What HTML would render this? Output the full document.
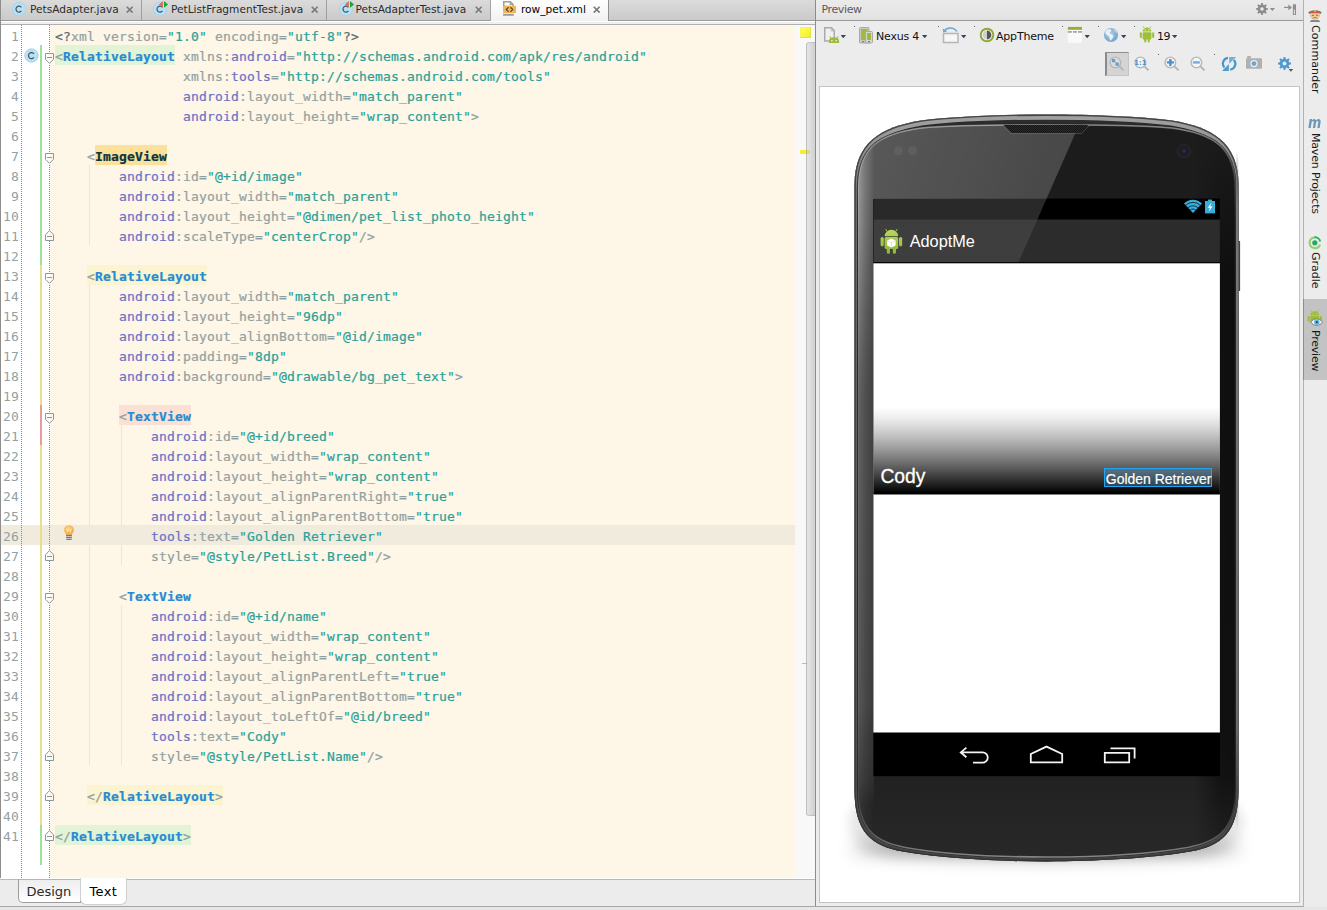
<!DOCTYPE html>
<html lang="en"><head><meta charset="utf-8"><title>row_pet.xml - AdoptMe</title>
<style>
*{box-sizing:border-box}
html,body{margin:0;padding:0}
body{width:1327px;height:910px;overflow:hidden;position:relative;background:#ececec;font-family:"DejaVu Sans","Liberation Sans",sans-serif;font-size:11px;color:#222}
.abs{position:absolute}
#tabbar{left:0;top:0;width:815px;height:21px;background:linear-gradient(#dbdbdb,#cacaca);border-bottom:1px solid #9a9a9a}
#tabgap{left:0;top:21px;width:815px;height:4px;background:linear-gradient(#ffffff 0,#ffffff 1px,#eeeeee 1px,#f1f1f1 3px);border-bottom:1px solid #b0b0b0}
.tab{top:0;height:20px;border-right:1px solid #9f9f9f;font-size:10.6px;line-height:20px;color:#2b2b2b;white-space:nowrap;letter-spacing:0}
.tab .lbl{position:absolute;top:-0.7px}
.tab.on{background:linear-gradient(#ffffff,#f1f1f1);height:21px;border-left:1px solid #a4a4a4;border-right:1px solid #8f8f8f;color:#000}
.x{position:absolute;top:5px;width:9px;height:9px}
#editor{left:0;top:25px;width:815px;height:853px;background:#fef6e7;overflow:hidden}
#gutter{left:0;top:0;width:50px;height:853px;background:#fff}
#leftedge{left:0;top:0;width:1px;height:906px;background:#8e8e8e}
.dot{width:1px;top:0;height:853px;background:repeating-linear-gradient(to bottom,#858585 0,#858585 1px,transparent 1px,transparent 2px)}
.ln{left:0;width:19px;text-align:right;height:20px;line-height:23px;font-family:"DejaVu Sans Mono","Liberation Mono",monospace;font-size:13px;letter-spacing:0.17px;color:#93a1a1}
.cl{height:20px;line-height:23px;white-space:pre;font-family:"DejaVu Sans Mono","Liberation Mono",monospace;font-size:13px;letter-spacing:0.173px;color:#93a1a1}
.cl span{-webkit-text-stroke:0.22px currentColor}
.g{color:#93a1a1}.d{color:#586e75}.t{color:#268bd2;font-weight:bold}.n{color:#6c71c4}.v{color:#2aa198}.w{color:#073642;font-weight:bold}
.guide{width:1px;background:#ece6d6}
.bar{left:40px;width:2px}
#cur{left:0;top:500px;width:795px;height:20px;background:#f1ebde}
#stripe{left:795px;top:0;width:20px;height:853px;background:#f8f8f8}
#thumb{left:806px;top:17px;width:9px;height:774px;background:linear-gradient(to right,rgba(205,205,205,.45),rgba(170,170,170,.5));border-radius:3px 0 0 3px;border:1px solid rgba(150,150,150,.35);border-right:none}
#btabs{left:0;top:878px;width:815px;height:28px;background:linear-gradient(#ffffff 0,#ffffff 1px,#bababa 1px,#bababa 2px,#ececec 2px)}
.bt{font-size:13px;line-height:16px;color:#2a2a2a;letter-spacing:-0.05px;white-space:nowrap}
#statusline{left:0;top:906px;width:1303px;height:1px;background:#a6a6a6}
#status{left:0;top:907px;width:1327px;height:3px;background:#e6e6e6}
#vdiv{left:815px;top:0;width:1px;height:906px;background:#8c8c8c}
#phead{left:816px;top:0;width:487px;height:21px;background:linear-gradient(#ebebeb,#e2e2e2);border-bottom:1px solid #9a9a9a;font-size:11px;color:#5a5a5a}
#ptool{left:816px;top:21px;width:487px;height:885px;background:#ececec}
#canvas{left:819px;top:86px;width:481px;height:817px;background:#fff;border:1px solid #c4c4c4}
#rstrip{left:1303px;top:0;width:24px;height:907px;background:#ececec;border-left:1px solid #b2b2b2}
.vt{position:absolute;transform-origin:0 0;transform:rotate(90deg);white-space:nowrap;font-size:11px;color:#1a1a1a;line-height:14px;letter-spacing:-0.2px}
.tbt{position:absolute;font-size:11px;color:#111;white-space:nowrap;letter-spacing:-0.25px}
.dd{position:absolute;width:5.4px;height:3.3px;background:#31466a;clip-path:polygon(0 0,100% 0,50% 100%)}
.sepdot{position:absolute;width:1px;height:1px;background:#666}
</style></head><body>
<div id="tabbar" class="abs"></div><div id="tabgap" class="abs"></div>
<div class="abs tab" style="left:1px;width:141px"><svg class="abs" style="left:10px;top:1px" width="17" height="16" viewBox="0 0 17 16"><circle cx="8" cy="8" r="6.7" fill="#b9dff5" stroke="#a3d2ee" stroke-width="0.8"/><path d="M10.4 6.3 A3 3 0 1 0 10.4 9.9" fill="none" stroke="#45505a" stroke-width="1.2"/></svg><span class="lbl" style="left:29px">PetsAdapter.java</span><svg class="abs" style="left:125px;top:5.5px" width="7.4" height="7.4" viewBox="0 0 8 8"><path d="M0.8 0.8 L7.2 7.2 M7.2 0.8 L0.8 7.2" stroke="#7c7c7c" stroke-width="1.8" fill="none"/></svg></div>
<div class="abs tab" style="left:142px;width:185px"><svg class="abs" style="left:10px;top:1px" width="17" height="16" viewBox="0 0 17 16"><circle cx="8" cy="8" r="6.7" fill="#b9dff5" stroke="#a3d2ee" stroke-width="0.8"/><path d="M10.4 6.3 A3 3 0 1 0 10.4 9.9" fill="none" stroke="#45505a" stroke-width="1.2"/><path d="M7 3.5 L10.9 0.1 L10.9 6.8 Z" fill="#e06a58"/><path d="M12 0 L16.1 3.4 L12 6.8 Z" fill="#10ae2c"/></svg><span class="lbl" style="left:29px">PetListFragmentTest.java</span><svg class="abs" style="left:169px;top:5.5px" width="7.4" height="7.4" viewBox="0 0 8 8"><path d="M0.8 0.8 L7.2 7.2 M7.2 0.8 L0.8 7.2" stroke="#7c7c7c" stroke-width="1.8" fill="none"/></svg></div>
<div class="abs tab" style="left:327px;width:164px"><svg class="abs" style="left:10.5px;top:1px" width="17" height="16" viewBox="0 0 17 16"><circle cx="8" cy="8" r="6.7" fill="#b9dff5" stroke="#a3d2ee" stroke-width="0.8"/><path d="M10.4 6.3 A3 3 0 1 0 10.4 9.9" fill="none" stroke="#45505a" stroke-width="1.2"/><path d="M7 3.5 L10.9 0.1 L10.9 6.8 Z" fill="#e06a58"/><path d="M12 0 L16.1 3.4 L12 6.8 Z" fill="#10ae2c"/></svg><span class="lbl" style="left:28.5px">PetsAdapterTest.java</span><svg class="abs" style="left:148px;top:5.5px" width="7.4" height="7.4" viewBox="0 0 8 8"><path d="M0.8 0.8 L7.2 7.2 M7.2 0.8 L0.8 7.2" stroke="#7c7c7c" stroke-width="1.8" fill="none"/></svg></div>
<div class="abs tab on" style="left:490px;width:119px"><svg class="abs" style="left:12px;top:1px" width="14" height="16" viewBox="0 0 14 16"><path d="M0.75 5.4 V0.85 H7.4 L10.1 3.5 V5.4 Z" fill="#fdfdfd" stroke="#9e9e9e" stroke-width="1.5"/><path d="M6.7 0.9 V4 H10.1 Z" fill="#9e9e9e"/><path d="M7.9 2.4 V3.2 H8.8 Z" fill="#fff"/><rect x="0" y="4.9" width="13" height="7.1" fill="#f5b553"/><rect x="0" y="12.8" width="10.8" height="2" fill="#9e9e9e"/><path d="M5.6 6.2 L3.2 8.45 L5.6 10.7 M7.4 6.2 L9.8 8.45 L7.4 10.7" fill="none" stroke="#4d4d4d" stroke-width="1.2"/></svg><span class="lbl" style="left:30px">row_pet.xml</span><svg class="abs" style="left:102px;top:5.5px" width="7.4" height="7.4" viewBox="0 0 8 8"><path d="M0.8 0.8 L7.2 7.2 M7.2 0.8 L0.8 7.2" stroke="#7c7c7c" stroke-width="1.8" fill="none"/></svg></div>
<div id="editor" class="abs">
<div id="gutter" class="abs"></div>
<div id="cur" class="abs"></div>
<div class="abs guide" style="left:89px;top:140px;height:80px"></div>
<div class="abs guide" style="left:89px;top:260px;height:240px"></div>
<div class="abs guide" style="left:89px;top:520px;height:220px"></div>
<div class="abs guide" style="left:121px;top:400px;height:100px"></div>
<div class="abs guide" style="left:121px;top:520px;height:20px"></div>
<div class="abs guide" style="left:121px;top:580px;height:160px"></div>
<div class="abs" style="left:55px;top:20px;width:120px;height:20px;background:#e3f3d6"></div>
<div class="abs" style="left:95px;top:120px;width:72px;height:20px;background:#fde09a"></div>
<div class="abs" style="left:87px;top:240px;width:120px;height:20px;background:#fcf4d0"></div>
<div class="abs" style="left:119px;top:380px;width:72px;height:20px;background:#fde0d4"></div>
<div class="abs" style="left:87px;top:760px;width:136px;height:20px;background:#fcf4d0"></div>
<div class="abs" style="left:55px;top:800px;width:136px;height:20px;background:#e3f3d6"></div>
<div class="abs dot" style="left:21px"></div><div class="abs dot" style="left:49px"></div>
<div class="abs bar" style="top:20px;height:220px;background:#9fe09a"></div>
<div class="abs bar" style="top:240px;height:140px;background:#e6e08c"></div>
<div class="abs bar" style="top:380px;height:40px;background:#ea9a9a"></div>
<div class="abs bar" style="top:420px;height:380px;background:#e6e08c"></div>
<div class="abs bar" style="top:800px;height:40px;background:#9fe09a"></div>
<div class="abs ln" style="top:0px">1</div>
<div class="abs ln" style="top:20px">2</div>
<div class="abs ln" style="top:40px">3</div>
<div class="abs ln" style="top:60px">4</div>
<div class="abs ln" style="top:80px">5</div>
<div class="abs ln" style="top:100px">6</div>
<div class="abs ln" style="top:120px">7</div>
<div class="abs ln" style="top:140px">8</div>
<div class="abs ln" style="top:160px">9</div>
<div class="abs ln" style="top:180px">10</div>
<div class="abs ln" style="top:200px">11</div>
<div class="abs ln" style="top:220px">12</div>
<div class="abs ln" style="top:240px">13</div>
<div class="abs ln" style="top:260px">14</div>
<div class="abs ln" style="top:280px">15</div>
<div class="abs ln" style="top:300px">16</div>
<div class="abs ln" style="top:320px">17</div>
<div class="abs ln" style="top:340px">18</div>
<div class="abs ln" style="top:360px">19</div>
<div class="abs ln" style="top:380px">20</div>
<div class="abs ln" style="top:400px">21</div>
<div class="abs ln" style="top:420px">22</div>
<div class="abs ln" style="top:440px">23</div>
<div class="abs ln" style="top:460px">24</div>
<div class="abs ln" style="top:480px">25</div>
<div class="abs ln" style="top:500px">26</div>
<div class="abs ln" style="top:520px">27</div>
<div class="abs ln" style="top:540px">28</div>
<div class="abs ln" style="top:560px">29</div>
<div class="abs ln" style="top:580px">30</div>
<div class="abs ln" style="top:600px">31</div>
<div class="abs ln" style="top:620px">32</div>
<div class="abs ln" style="top:640px">33</div>
<div class="abs ln" style="top:660px">34</div>
<div class="abs ln" style="top:680px">35</div>
<div class="abs ln" style="top:700px">36</div>
<div class="abs ln" style="top:720px">37</div>
<div class="abs ln" style="top:740px">38</div>
<div class="abs ln" style="top:760px">39</div>
<div class="abs ln" style="top:780px">40</div>
<div class="abs ln" style="top:800px">41</div>
<div class="abs cl" style="left:55px;top:0px"><span class="d">&lt;?</span><span class="g">xml version=</span><span class="v">"1.0"</span><span class="g"> encoding=</span><span class="v">"utf-8"</span><span class="d">?&gt;</span></div>
<div class="abs cl" style="left:55px;top:20px"><span class="g">&lt;</span><span class="t">RelativeLayout</span><span class="g"> xmlns:</span><span class="n">android</span><span class="g">=</span><span class="v">"http://schemas.android.com/apk/res/android"</span></div>
<div class="abs cl" style="left:183px;top:40px"><span class="g">xmlns:</span><span class="n">tools</span><span class="g">=</span><span class="v">"http://schemas.android.com/tools"</span></div>
<div class="abs cl" style="left:183px;top:60px"><span class="n">android</span><span class="g">:layout_width=</span><span class="v">"match_parent"</span></div>
<div class="abs cl" style="left:183px;top:80px"><span class="n">android</span><span class="g">:layout_height=</span><span class="v">"wrap_content"</span><span class="g">&gt;</span></div>
<div class="abs cl" style="left:87px;top:120px"><span class="g">&lt;</span><span class="w">ImageView</span></div>
<div class="abs cl" style="left:119px;top:140px"><span class="n">android</span><span class="g">:id=</span><span class="v">"@+id/image"</span></div>
<div class="abs cl" style="left:119px;top:160px"><span class="n">android</span><span class="g">:layout_width=</span><span class="v">"match_parent"</span></div>
<div class="abs cl" style="left:119px;top:180px"><span class="n">android</span><span class="g">:layout_height=</span><span class="v">"@dimen/pet_list_photo_height"</span></div>
<div class="abs cl" style="left:119px;top:200px"><span class="n">android</span><span class="g">:scaleType=</span><span class="v">"centerCrop"</span><span class="g">/&gt;</span></div>
<div class="abs cl" style="left:87px;top:240px"><span class="g">&lt;</span><span class="t">RelativeLayout</span></div>
<div class="abs cl" style="left:119px;top:260px"><span class="n">android</span><span class="g">:layout_width=</span><span class="v">"match_parent"</span></div>
<div class="abs cl" style="left:119px;top:280px"><span class="n">android</span><span class="g">:layout_height=</span><span class="v">"96dp"</span></div>
<div class="abs cl" style="left:119px;top:300px"><span class="n">android</span><span class="g">:layout_alignBottom=</span><span class="v">"@id/image"</span></div>
<div class="abs cl" style="left:119px;top:320px"><span class="n">android</span><span class="g">:padding=</span><span class="v">"8dp"</span></div>
<div class="abs cl" style="left:119px;top:340px"><span class="n">android</span><span class="g">:background=</span><span class="v">"@drawable/bg_pet_text"</span><span class="g">&gt;</span></div>
<div class="abs cl" style="left:119px;top:380px"><span class="g">&lt;</span><span class="t">TextView</span></div>
<div class="abs cl" style="left:151px;top:400px"><span class="n">android</span><span class="g">:id=</span><span class="v">"@+id/breed"</span></div>
<div class="abs cl" style="left:151px;top:420px"><span class="n">android</span><span class="g">:layout_width=</span><span class="v">"wrap_content"</span></div>
<div class="abs cl" style="left:151px;top:440px"><span class="n">android</span><span class="g">:layout_height=</span><span class="v">"wrap_content"</span></div>
<div class="abs cl" style="left:151px;top:460px"><span class="n">android</span><span class="g">:layout_alignParentRight=</span><span class="v">"true"</span></div>
<div class="abs cl" style="left:151px;top:480px"><span class="n">android</span><span class="g">:layout_alignParentBottom=</span><span class="v">"true"</span></div>
<div class="abs cl" style="left:151px;top:500px"><span class="n">tools</span><span class="g">:text=</span><span class="v">"Golden Retriever"</span></div>
<div class="abs cl" style="left:151px;top:520px"><span class="g">style=</span><span class="v">"@style/PetList.Breed"</span><span class="g">/&gt;</span></div>
<div class="abs cl" style="left:119px;top:560px"><span class="g">&lt;</span><span class="t">TextView</span></div>
<div class="abs cl" style="left:151px;top:580px"><span class="n">android</span><span class="g">:id=</span><span class="v">"@+id/name"</span></div>
<div class="abs cl" style="left:151px;top:600px"><span class="n">android</span><span class="g">:layout_width=</span><span class="v">"wrap_content"</span></div>
<div class="abs cl" style="left:151px;top:620px"><span class="n">android</span><span class="g">:layout_height=</span><span class="v">"wrap_content"</span></div>
<div class="abs cl" style="left:151px;top:640px"><span class="n">android</span><span class="g">:layout_alignParentLeft=</span><span class="v">"true"</span></div>
<div class="abs cl" style="left:151px;top:660px"><span class="n">android</span><span class="g">:layout_alignParentBottom=</span><span class="v">"true"</span></div>
<div class="abs cl" style="left:151px;top:680px"><span class="n">android</span><span class="g">:layout_toLeftOf=</span><span class="v">"@id/breed"</span></div>
<div class="abs cl" style="left:151px;top:700px"><span class="n">tools</span><span class="g">:text=</span><span class="v">"Cody"</span></div>
<div class="abs cl" style="left:151px;top:720px"><span class="g">style=</span><span class="v">"@style/PetList.Name"</span><span class="g">/&gt;</span></div>
<div class="abs cl" style="left:87px;top:760px"><span class="g">&lt;/</span><span class="t">RelativeLayout</span><span class="g">&gt;</span></div>
<div class="abs cl" style="left:55px;top:800px"><span class="g">&lt;/</span><span class="t">RelativeLayout</span><span class="g">&gt;</span></div>
<svg class="abs" style="left:44px;top:28px" width="11" height="12" viewBox="0 0 11 12"><rect x="1" y="0" width="5" height="11" fill="#fff"/><rect x="6" y="0" width="4" height="11" fill="#fef6e7"/><path d="M1.5 0.5 H9.5 V6.3 L5.5 10.4 L1.5 6.3 Z" fill="none" stroke="#8a999b" stroke-width="1"/><path d="M3 4.5 H8" stroke="#8a999b" stroke-width="1"/></svg>
<svg class="abs" style="left:44px;top:128px" width="11" height="12" viewBox="0 0 11 12"><rect x="1" y="0" width="5" height="11" fill="#fff"/><rect x="6" y="0" width="4" height="11" fill="#fef6e7"/><path d="M1.5 0.5 H9.5 V6.3 L5.5 10.4 L1.5 6.3 Z" fill="none" stroke="#8a999b" stroke-width="1"/><path d="M3 4.5 H8" stroke="#8a999b" stroke-width="1"/></svg>
<svg class="abs" style="left:44px;top:248px" width="11" height="12" viewBox="0 0 11 12"><rect x="1" y="0" width="5" height="11" fill="#fff"/><rect x="6" y="0" width="4" height="11" fill="#fef6e7"/><path d="M1.5 0.5 H9.5 V6.3 L5.5 10.4 L1.5 6.3 Z" fill="none" stroke="#8a999b" stroke-width="1"/><path d="M3 4.5 H8" stroke="#8a999b" stroke-width="1"/></svg>
<svg class="abs" style="left:44px;top:388px" width="11" height="12" viewBox="0 0 11 12"><rect x="1" y="0" width="5" height="11" fill="#fff"/><rect x="6" y="0" width="4" height="11" fill="#fef6e7"/><path d="M1.5 0.5 H9.5 V6.3 L5.5 10.4 L1.5 6.3 Z" fill="none" stroke="#8a999b" stroke-width="1"/><path d="M3 4.5 H8" stroke="#8a999b" stroke-width="1"/></svg>
<svg class="abs" style="left:44px;top:568px" width="11" height="12" viewBox="0 0 11 12"><rect x="1" y="0" width="5" height="11" fill="#fff"/><rect x="6" y="0" width="4" height="11" fill="#fef6e7"/><path d="M1.5 0.5 H9.5 V6.3 L5.5 10.4 L1.5 6.3 Z" fill="none" stroke="#8a999b" stroke-width="1"/><path d="M3 4.5 H8" stroke="#8a999b" stroke-width="1"/></svg>
<svg class="abs" style="left:44px;top:205px" width="11" height="12" viewBox="0 0 11 12"><rect x="1" y="0" width="5" height="11" fill="#fff"/><rect x="6" y="0" width="4" height="11" fill="#fef6e7"/><path d="M1.5 10.5 H9.5 V4.7 L5.5 0.6 L1.5 4.7 Z" fill="none" stroke="#8a999b" stroke-width="1"/><path d="M3 6.5 H8" stroke="#8a999b" stroke-width="1"/></svg>
<svg class="abs" style="left:44px;top:525px" width="11" height="12" viewBox="0 0 11 12"><rect x="1" y="0" width="5" height="11" fill="#fff"/><rect x="6" y="0" width="4" height="11" fill="#fef6e7"/><path d="M1.5 10.5 H9.5 V4.7 L5.5 0.6 L1.5 4.7 Z" fill="none" stroke="#8a999b" stroke-width="1"/><path d="M3 6.5 H8" stroke="#8a999b" stroke-width="1"/></svg>
<svg class="abs" style="left:44px;top:725px" width="11" height="12" viewBox="0 0 11 12"><rect x="1" y="0" width="5" height="11" fill="#fff"/><rect x="6" y="0" width="4" height="11" fill="#fef6e7"/><path d="M1.5 10.5 H9.5 V4.7 L5.5 0.6 L1.5 4.7 Z" fill="none" stroke="#8a999b" stroke-width="1"/><path d="M3 6.5 H8" stroke="#8a999b" stroke-width="1"/></svg>
<svg class="abs" style="left:44px;top:765px" width="11" height="12" viewBox="0 0 11 12"><rect x="1" y="0" width="5" height="11" fill="#fff"/><rect x="6" y="0" width="4" height="11" fill="#fef6e7"/><path d="M1.5 10.5 H9.5 V4.7 L5.5 0.6 L1.5 4.7 Z" fill="none" stroke="#8a999b" stroke-width="1"/><path d="M3 6.5 H8" stroke="#8a999b" stroke-width="1"/></svg>
<svg class="abs" style="left:44px;top:805px" width="11" height="12" viewBox="0 0 11 12"><rect x="1" y="0" width="5" height="11" fill="#fff"/><rect x="6" y="0" width="4" height="11" fill="#fef6e7"/><path d="M1.5 10.5 H9.5 V4.7 L5.5 0.6 L1.5 4.7 Z" fill="none" stroke="#8a999b" stroke-width="1"/><path d="M3 6.5 H8" stroke="#8a999b" stroke-width="1"/></svg>
<svg class="abs" style="left:24px;top:23px" width="15" height="15" viewBox="0 0 15 15"><circle cx="7.5" cy="7.5" r="6.8" fill="#b9dff5" stroke="#a3d2ee" stroke-width="0.8"/><path d="M9.9 5.8 A3 3 0 1 0 9.9 9.4" fill="none" stroke="#45505a" stroke-width="1.2"/></svg>
<svg class="abs" style="left:63px;top:500px" width="12" height="16" viewBox="0 0 12 16"><defs><radialGradient id="bulb" cx="0.42" cy="0.36" r="0.62"><stop offset="0" stop-color="#fcd88e"/><stop offset="0.55" stop-color="#f7bd63"/><stop offset="1" stop-color="#f0a64c"/></radialGradient></defs><path d="M6 0.3 C2.9 0.3 1.1 2.5 1.1 5 C1.1 7.2 2.7 8.2 3.2 10 H8.8 C9.3 8.2 10.9 7.2 10.9 5 C10.9 2.5 9.1 0.3 6 0.3 Z" fill="url(#bulb)"/><path d="M3.2 4.2 L4.6 5.4 V7 M5.2 4.4 L6 5.2 L6.8 4.4 M8.8 4.2 L7.4 5.4 V7" fill="none" stroke="#fff3cc" stroke-width="0.9"/><rect x="3.1" y="10" width="5.8" height="5" fill="#c4c4c4"/><rect x="3.1" y="10" width="5.8" height="1" fill="#727a82"/><rect x="3.1" y="12" width="5.8" height="1" fill="#7c7c7c"/><rect x="3.6" y="14" width="4.8" height="1" fill="#7c7c7c"/></svg>
<div id="stripe" class="abs"></div>
<div class="abs" style="left:800px;top:2px;width:11px;height:11px;background:linear-gradient(135deg,#ffff58,#f0f02c);border:1px solid #e2e240;border-top-color:#f4f45a;border-left-color:#f4f45a"></div>
<div class="abs" style="left:800px;top:125px;width:10px;height:4px;background:#f3ef2a;border-radius:1px"></div>
<div class="abs" style="left:802px;top:638px;width:5px;height:1px;background:#b9b4e6"></div>
<div id="thumb" class="abs"></div>
</div>
<div id="leftedge" class="abs"></div>
<div id="btabs" class="abs"></div>
<div class="abs bt" style="left:18px;top:879px;width:63px;height:24px;border:1px solid #9d9d9d;border-top-color:#b4b4b4;border-radius:0 0 0 5px;background:linear-gradient(#eeeeee,#ffffff)"><span style="position:absolute;left:7.6px;top:3.5px">Design</span></div>
<div class="abs bt" style="left:80px;top:878px;width:47px;height:27px;border:1px solid #cfcfcf;border-top:none;border-radius:0 0 6px 6px;background:#fff;color:#000"><span style="position:absolute;left:8.4px;top:5.5px;letter-spacing:0.4px">Text</span></div>
<div id="statusline" class="abs"></div><div id="status" class="abs"></div>
<div id="vdiv" class="abs"></div>
<div id="phead" class="abs"><span style="position:absolute;left:5.5px;top:2.5px;letter-spacing:-0.38px">Preview</span></div>
<svg class="abs" style="left:1256px;top:3px" width="12" height="12" viewBox="0 0 12 12"><polygon points="11.94,5.15 11.94,6.85 10.18,7.07 9.72,8.20 10.80,9.60 9.60,10.80 8.20,9.72 7.07,10.18 6.85,11.94 5.15,11.94 4.93,10.18 3.80,9.72 2.40,10.80 1.20,9.60 2.28,8.20 1.82,7.07 0.06,6.85 0.06,5.15 1.82,4.93 2.28,3.80 1.20,2.40 2.40,1.20 3.80,2.28 4.93,1.82 5.15,0.06 6.85,0.06 7.07,1.82 8.20,2.28 9.60,1.20 10.80,2.40 9.72,3.80 10.18,4.93" fill="#8c8c8c"/><circle cx="6.0" cy="6.0" r="1.80" fill="#e8e8e8"/></svg>
<div class="dd" style="left:1269.8px;top:7.9px;width:5.2px;height:3px;background:#8c8c8c"></div>
<svg class="abs" style="left:1284px;top:4px" width="13" height="12" viewBox="0 0 13 12"><path d="M0 3.4 H7" fill="none" stroke="#8e8e8e" stroke-width="1.2"/><path d="M4.4 0.6 L8 3.4 L4.4 6.2 Z" fill="#8e8e8e"/><rect x="8.9" y="0.3" width="3.1" height="10.7" fill="#8e8e8e"/><rect x="9.9" y="5.6" width="1.1" height="4.6" fill="#dcdcdc"/></svg>
<div id="ptool" class="abs"></div>
<svg class="abs" style="left:823px;top:26px" width="18" height="18" viewBox="0 0 18 18"><path d="M1.75 1.85 H8.4 L11.2 4.6 V15.1 H1.75 Z" fill="#f0f0f0" stroke="#aaaaaa" stroke-width="1.5"/><path d="M8.2 2.2 V4.9 H10.9" fill="none" stroke="#b4b4b4" stroke-width="0.9"/><path d="M5.9 16.9 V15.2 A5.1 4 0 0 1 16.1 15.2 V16.9 Z" fill="#9dba3a"/><path d="M7.9 12.2 L6.9 10.5 M14.1 12.2 L15.1 10.5" stroke="#9dba3a" stroke-width="1.2"/><circle cx="8.9" cy="14.7" r="0.75" fill="#fff"/><circle cx="13.1" cy="14.7" r="0.75" fill="#fff"/></svg>
<div class="dd" style="left:840.6px;top:35px"></div>
<svg class="abs" style="left:859px;top:27px" width="14" height="17" viewBox="0 0 14 17"><rect x="0.5" y="0.5" width="9.5" height="15.5" rx="1" fill="#c9c9c9" stroke="#a9a9a9"/><rect x="2" y="2" width="6.5" height="11" fill="#9dbc39"/><rect x="6.5" y="4.5" width="7" height="11.5" rx="1" fill="#d6d6d6" stroke="#a9a9a9"/><rect x="8" y="6" width="4" height="7" fill="#9dbc39"/><rect x="3.2" y="14.2" width="2" height="1" fill="#666"/><rect x="9" y="14.2" width="2" height="1" fill="#666"/></svg>
<span class="tbt" style="left:876px;top:29.5px;letter-spacing:-0.2px">Nexus 4</span>
<div class="dd" style="left:922px;top:35px"></div>
<svg class="abs" style="left:942px;top:26px" width="18" height="18" viewBox="0 0 18 18"><rect x="1.5" y="7.5" width="14.5" height="9" fill="#f6f6f6" stroke="#b5b5b5" stroke-width="1.5"/><path d="M2 5.2 C5 1.2 11.5 0.8 15 5.6" fill="none" stroke="#6fa6d2" stroke-width="1.5"/><path d="M0.6 2.4 L1.2 6.6 L5.2 5.4 Z" fill="#6fa6d2"/></svg>
<div class="dd" style="left:961px;top:35px"></div>
<svg class="abs" style="left:979px;top:27px" width="16" height="16" viewBox="0 0 16 16"><circle cx="8" cy="8" r="6.3" fill="#f4f4f4" stroke="#8ea838" stroke-width="1.9"/><path d="M8 3.6 A4.4 4.4 0 0 0 8 12.4 Z" fill="#cfcfcf"/><path d="M8 3.6 A4.4 4.4 0 0 1 8 12.4 Z" fill="#555"/></svg>
<span class="tbt" style="left:996px;top:29.5px;letter-spacing:-0.2px">AppTheme</span>
<svg class="abs" style="left:1067px;top:26px" width="16" height="18" viewBox="0 0 16 18"><rect x="0.8" y="0.9" width="14.2" height="16" fill="#f9f9f9"/><rect x="0.8" y="0.9" width="14.2" height="2.9" fill="#93ae33"/><rect x="0.8" y="5" width="4" height="1.8" fill="#a6a6a6"/><rect x="6" y="5" width="3.9" height="1.8" fill="#a6a6a6"/><rect x="11.1" y="5" width="3.9" height="1.8" fill="#a6a6a6"/></svg>
<div class="dd" style="left:1084.5px;top:35px"></div>
<svg class="abs" style="left:1103px;top:27px" width="16" height="16" viewBox="0 0 16 16"><defs><radialGradient id="gl" cx="0.4" cy="0.35" r="0.75"><stop offset="0" stop-color="#a9cde6"/><stop offset="1" stop-color="#6d9fc6"/></radialGradient></defs><circle cx="8" cy="8" r="7.1" fill="url(#gl)"/><path d="M3.2 3.4 C5 1.8 7.6 2 8.2 3.2 C8.6 4.2 7 4.6 6.6 5.6 C6.2 6.6 7.4 6.8 8.6 7.2 C10.4 7.8 11 9.2 10 10.6 C9.2 11.8 8.6 13.2 7.4 13.8 C6.4 12.6 6.8 10.8 5.8 9.6 C4.8 8.4 3.4 8 2.6 6.6 C2.2 5.4 2.4 4.4 3.2 3.4 Z" fill="#eef4f9" opacity="0.92"/><path d="M10.6 2.2 C12.4 2.8 13.8 4.2 14.4 5.8 C13.2 5.6 12 5 11.2 3.8 Z" fill="#eef4f9" opacity="0.6"/></svg>
<div class="dd" style="left:1121px;top:35px"></div>
<svg class="abs" style="left:1139px;top:26px" width="16" height="17" viewBox="0 0 16 17"><path d="M3.6 5.6 A4.4 4.2 0 0 1 12.4 5.6 Z" fill="#9fbf3b"/><path d="M5 2 L4 0.4 M11 2 L12 0.4" stroke="#9fbf3b" stroke-width="0.9"/><rect x="3.6" y="6.2" width="8.8" height="7.2" rx="1" fill="#9fbf3b"/><rect x="0.8" y="6.2" width="2.1" height="5.8" rx="1" fill="#9fbf3b"/><rect x="13.1" y="6.2" width="2.1" height="5.8" rx="1" fill="#9fbf3b"/><rect x="5.2" y="12.5" width="2.1" height="4" rx="1" fill="#9fbf3b"/><rect x="8.7" y="12.5" width="2.1" height="4" rx="1" fill="#9fbf3b"/><circle cx="6.2" cy="3.8" r="0.6" fill="#fff"/><circle cx="9.8" cy="3.8" r="0.6" fill="#fff"/></svg>
<span class="tbt" style="left:1157px;top:29.5px;letter-spacing:-0.4px">19</span>
<div class="dd" style="left:1172px;top:35px"></div>
<div class="sepdot" style="left:854px;top:26px"></div>
<div class="sepdot" style="left:938px;top:26px"></div>
<div class="sepdot" style="left:974px;top:26px"></div>
<div class="sepdot" style="left:1062px;top:26px"></div>
<div class="sepdot" style="left:1098px;top:26px"></div>
<div class="sepdot" style="left:1134px;top:26px"></div>
<div class="sepdot" style="left:1158px;top:54px"></div>
<div class="sepdot" style="left:1214px;top:54px"></div>
<div class="abs" style="left:1105px;top:52px;width:24px;height:24px;background:#d4d4d4;border:1px solid #c4c4c4;border-top-color:#8f8f8f;border-left:2px solid #8a8a8a"></div>
<svg class="abs" style="left:1109px;top:56px" width="16" height="16" viewBox="0 0 16 16"><circle cx="6.4" cy="6.4" r="5.3" fill="#dcdcdc" stroke="#b7b7b7" stroke-width="1.4"/><path d="M10.4 10.4 L14.6 14.4" stroke="#b4b4b4" stroke-width="2"/><path d="M3 3 H6.2 V6.2 H3 Z M6.6 6.6 H9.8 V9.8 H6.6 Z" fill="#5f9fd2"/><path d="M6.2 6.2 L7 7" stroke="#6fa6d2" stroke-width="1"/></svg>
<svg class="abs" style="left:1134px;top:56px" width="16" height="16" viewBox="0 0 16 16"><circle cx="6.4" cy="6.4" r="5.3" fill="#f4f4f4" stroke="#b7b7b7" stroke-width="1.4"/><path d="M10.4 10.4 L14.6 14.4" stroke="#b4b4b4" stroke-width="2"/><text x="6.4" y="8.8" font-size="6.8" font-weight="bold" text-anchor="middle" fill="#4a8fc8" font-family="DejaVu Sans,sans-serif">1:1</text></svg>
<svg class="abs" style="left:1164px;top:56px" width="16" height="16" viewBox="0 0 16 16"><circle cx="6.4" cy="6.4" r="5.3" fill="#f4f4f4" stroke="#b7b7b7" stroke-width="1.4"/><path d="M10.4 10.4 L14.6 14.4" stroke="#b4b4b4" stroke-width="2"/><path d="M2.9 6.4 H9.9 M6.4 2.9 V9.9" stroke="#4a8fca" stroke-width="2.4"/></svg>
<svg class="abs" style="left:1189.5px;top:56px" width="16" height="16" viewBox="0 0 16 16"><circle cx="6.4" cy="6.4" r="5.3" fill="#f4f4f4" stroke="#b7b7b7" stroke-width="1.4"/><path d="M10.4 10.4 L14.6 14.4" stroke="#b4b4b4" stroke-width="2"/><path d="M2.9 6.4 H9.9" stroke="#74addc" stroke-width="2.4"/></svg>
<svg class="abs" style="left:1221px;top:56px" width="17" height="16" viewBox="0 0 17 16"><path d="M7 1.9 A5.7 5.7 0 0 0 3.4 11.4" fill="none" stroke="#4a98c9" stroke-width="2.2"/><path d="M9.1 13.5 A5.7 5.7 0 0 0 12.8 3.9" fill="none" stroke="#4a98c9" stroke-width="2.2"/><path d="M1 14.9 H7.9 V8.1 Z" fill="#4f9fcc"/><path d="M8.2 1 H15.1 L8.2 7.7 Z" fill="#6fb0d6"/></svg>
<svg class="abs" style="left:1246px;top:56px" width="16" height="13" viewBox="0 0 16 13"><rect x="1.2" y="0" width="3.6" height="2.4" fill="#b0b0b0"/><rect x="0" y="2.2" width="16" height="10.6" rx="0.8" fill="#b0b0b0"/><circle cx="8" cy="7.6" r="3.6" fill="#e8eef4"/><circle cx="8" cy="7.6" r="2.4" fill="#6aa6d6"/></svg>
<svg class="abs" style="left:1278px;top:57px" width="13" height="13" viewBox="0 0 13 13"><polygon points="12.94,5.58 12.94,7.42 11.03,7.66 10.53,8.88 11.70,10.40 10.40,11.70 8.88,10.53 7.66,11.03 7.42,12.94 5.58,12.94 5.34,11.03 4.12,10.53 2.60,11.70 1.30,10.40 2.47,8.88 1.97,7.66 0.06,7.42 0.06,5.58 1.97,5.34 2.47,4.12 1.30,2.60 2.60,1.30 4.12,2.47 5.34,1.97 5.58,0.06 7.42,0.06 7.66,1.97 8.88,2.47 10.40,1.30 11.70,2.60 10.53,4.12 11.03,5.34" fill="#4f97cf"/><circle cx="6.5" cy="6.5" r="1.95" fill="#ececec"/></svg>
<div class="dd" style="left:1288.6px;top:69px;width:4.6px;height:2.8px;background:#555"></div>
<div id="canvas" class="abs"></div>
<svg class="abs" style="left:820px;top:87px" width="479" height="815" viewBox="820 87 479 815">
<defs>
<filter id="sh" x="-20%" y="-300%" width="140%" height="700%"><feGaussianBlur stdDeviation="9"/></filter>
<filter id="sh2" x="-20%" y="-20%" width="140%" height="140%"><feGaussianBlur stdDeviation="6"/></filter>
<filter id="b1" x="-10%" y="-10%" width="120%" height="120%"><feGaussianBlur stdDeviation="0.7"/></filter>
<filter id="b3" x="-50%" y="-5%" width="200%" height="110%"><feGaussianBlur stdDeviation="2.2"/></filter>
<linearGradient id="rimv" gradientUnits="userSpaceOnUse" x1="0" y1="114" x2="0" y2="862">
 <stop offset="0" stop-color="#8f8f8f"/><stop offset="0.003" stop-color="#a2a2a2"/><stop offset="0.008" stop-color="#6a6a6a"/><stop offset="0.0125" stop-color="#2c2c2c"/>
 <stop offset="0.03" stop-color="#3c3c3c"/><stop offset="0.12" stop-color="#4a4a4a"/><stop offset="0.9" stop-color="#3a3a3a"/>
 <stop offset="0.988" stop-color="#2a2a2a"/><stop offset="0.992" stop-color="#6c6c6c"/><stop offset="0.996" stop-color="#4a4a4a"/><stop offset="1" stop-color="#2c2c2c"/></linearGradient>
<linearGradient id="r1" gradientUnits="userSpaceOnUse" x1="0" y1="114" x2="0" y2="862"><stop offset="0" stop-color="#474747"/><stop offset="0.5" stop-color="#3a3a3a"/><stop offset="1" stop-color="#2a2a2a"/></linearGradient>
<linearGradient id="r2" gradientUnits="userSpaceOnUse" x1="0" y1="114" x2="0" y2="862"><stop offset="0" stop-color="#6e6e6e"/><stop offset="0.12" stop-color="#505050"/><stop offset="0.88" stop-color="#484848"/><stop offset="1" stop-color="#888"/></linearGradient>
<linearGradient id="r3" gradientUnits="userSpaceOnUse" x1="0" y1="114" x2="0" y2="862"><stop offset="0" stop-color="#a2a2a2"/><stop offset="0.1" stop-color="#7e7e7e"/><stop offset="0.85" stop-color="#5c5c5c"/><stop offset="0.94" stop-color="#4c4c4c"/><stop offset="1" stop-color="#424242"/></linearGradient>
<linearGradient id="r4" gradientUnits="userSpaceOnUse" x1="0" y1="114" x2="0" y2="862"><stop offset="0" stop-color="#444"/><stop offset="0.12" stop-color="#444"/><stop offset="0.9" stop-color="#3a3a3a"/><stop offset="1" stop-color="#333"/></linearGradient>
<linearGradient id="edgeh" gradientUnits="userSpaceOnUse" x1="854" y1="0" x2="1239" y2="0">
 <stop offset="0" stop-color="#4a4a4a"/><stop offset="0.006" stop-color="#8c8c8c"/><stop offset="0.5" stop-color="#9a9a9a"/><stop offset="0.994" stop-color="#8a8a8a"/><stop offset="1" stop-color="#555"/></linearGradient>
<linearGradient id="inh" gradientUnits="userSpaceOnUse" x1="0" y1="120" x2="0" y2="860"><stop offset="0" stop-color="#8e8e8e"/><stop offset="0.06" stop-color="#808080" stop-opacity="0.55"/><stop offset="0.14" stop-color="#666" stop-opacity="0.12"/><stop offset="0.9" stop-color="#666" stop-opacity="0.12"/><stop offset="0.96" stop-color="#707070" stop-opacity="0.7"/><stop offset="1" stop-color="#8c8c8c" stop-opacity="1"/></linearGradient>
<linearGradient id="rdark" gradientUnits="userSpaceOnUse" x1="1195" y1="0" x2="1236" y2="0"><stop offset="0" stop-color="#000" stop-opacity="0"/><stop offset="0.6" stop-color="#000" stop-opacity="0.45"/><stop offset="1" stop-color="#000" stop-opacity="0.5"/></linearGradient>
<linearGradient id="redge" gradientUnits="userSpaceOnUse" x1="0" y1="150" x2="0" y2="830"><stop offset="0" stop-color="#777" stop-opacity="0"/><stop offset="0.08" stop-color="#777" stop-opacity="1"/><stop offset="0.85" stop-color="#6a6a6a" stop-opacity="1"/><stop offset="1" stop-color="#555" stop-opacity="0"/></linearGradient>
<linearGradient id="leftb" gradientUnits="userSpaceOnUse" x1="856" y1="0" x2="875" y2="0"><stop offset="0" stop-color="#fff" stop-opacity="0.1"/><stop offset="0.12" stop-color="#fff" stop-opacity="0.37"/><stop offset="0.5" stop-color="#fff" stop-opacity="0.18"/><stop offset="0.9" stop-color="#fff" stop-opacity="0.03"/><stop offset="1" stop-color="#fff" stop-opacity="0"/></linearGradient>
<linearGradient id="lbR" gradientUnits="userSpaceOnUse" x1="0" y1="199" x2="0" y2="850"><stop offset="0" stop-color="#fff" stop-opacity="0.25"/><stop offset="0.25" stop-color="#fff" stop-opacity="0.15"/><stop offset="0.77" stop-color="#fff" stop-opacity="0.12"/><stop offset="0.886" stop-color="#fff" stop-opacity="0.06"/><stop offset="0.93" stop-color="#fff" stop-opacity="0"/><stop offset="1" stop-color="#fff" stop-opacity="0"/></linearGradient>
<linearGradient id="leftfade" gradientUnits="userSpaceOnUse" x1="0" y1="120" x2="0" y2="850"><stop offset="0" stop-color="#fff" stop-opacity="1"/><stop offset="0.14" stop-color="#fff" stop-opacity="1"/><stop offset="0.38" stop-color="#fff" stop-opacity="0.5"/><stop offset="0.8" stop-color="#fff" stop-opacity="0.42"/><stop offset="1" stop-color="#fff" stop-opacity="0.15"/></linearGradient>
<linearGradient id="rfade" gradientUnits="userSpaceOnUse" x1="0" y1="130" x2="0" y2="860"><stop offset="0" stop-color="#fff" stop-opacity="0"/><stop offset="0.2" stop-color="#fff" stop-opacity="1"/><stop offset="0.88" stop-color="#fff" stop-opacity="1"/><stop offset="1" stop-color="#fff" stop-opacity="0.2"/></linearGradient>
<mask id="rm" maskUnits="userSpaceOnUse" x="1190" y="100" width="60" height="780"><rect x="1190" y="100" width="60" height="780" fill="url(#rfade)"/></mask>
<mask id="lm" maskUnits="userSpaceOnUse" x="840" y="100" width="60" height="780"><rect x="840" y="100" width="60" height="780" fill="url(#leftfade)"/></mask>
<linearGradient id="refl" gradientUnits="userSpaceOnUse" x1="860" y1="130" x2="1060" y2="200"><stop offset="0" stop-color="#fff" stop-opacity="0.27"/><stop offset="1" stop-color="#fff" stop-opacity="0.19"/></linearGradient>
<linearGradient id="droidg" gradientUnits="userSpaceOnUse" x1="0" y1="229" x2="0" y2="254"><stop offset="0" stop-color="#b9d862"/><stop offset="1" stop-color="#8fb436"/></linearGradient>
<linearGradient id="faceg" gradientUnits="userSpaceOnUse" x1="0" y1="124" x2="0" y2="857"><stop offset="0" stop-color="#1c1c1c"/><stop offset="0.85" stop-color="#1f1f1f"/><stop offset="1" stop-color="#282828"/></linearGradient>
<linearGradient id="petg" x1="0" y1="0" x2="0" y2="1"><stop offset="0.000" stop-color="#000" stop-opacity="0.000"/><stop offset="0.125" stop-color="#000" stop-opacity="0.067"/><stop offset="0.250" stop-color="#000" stop-opacity="0.165"/><stop offset="0.375" stop-color="#000" stop-opacity="0.279"/><stop offset="0.500" stop-color="#000" stop-opacity="0.406"/><stop offset="0.625" stop-color="#000" stop-opacity="0.543"/><stop offset="0.750" stop-color="#000" stop-opacity="0.688"/><stop offset="0.875" stop-color="#000" stop-opacity="0.841"/><stop offset="1.000" stop-color="#000" stop-opacity="1.000"/></linearGradient>
<clipPath id="face"><path d="M858 188 C858 147 880 133.5 921 128 C953 125 1000 124.7 1046.5 124.7 C1093 124.7 1140 125 1172 128 C1213 133.5 1235.3 147 1235.3 188 L1235.3 789 C1235.3 828 1219.5 841.5 1189 847.2 C1150 854 1093 857 1046.5 857 C1000 857 943 854 904 847.2 C873.5 841.5 858 828 858 789 Z"/></clipPath>
<clipPath id="outerc"><path d="M854.5 185 C854.5 142 881 127 921 120.4 C953 116.5 1000 114.5 1046.5 114.5 C1093 114.5 1140 116.5 1172 120.4 C1212 127 1238.5 142 1238.5 185 L1238.5 790 C1238.5 832 1222 846 1190 851.6 C1150 858.5 1093 861.5 1046.5 861.5 C1000 861.5 943 858.5 903 851.6 C871 846 854.5 832 854.5 790 Z"/></clipPath>
<pattern id="grille" width="2" height="2" patternUnits="userSpaceOnUse"><rect width="2" height="2" fill="#2b2b2b"/><rect width="1" height="1" fill="#151515"/><rect x="1" y="1" width="1" height="1" fill="#151515"/></pattern>
</defs>
<ellipse cx="1046" cy="848" rx="196" ry="10" fill="#000" opacity="0.34" filter="url(#sh)"/>
<rect x="849" y="790" width="394" height="66" rx="50" fill="#000" opacity="0.1" filter="url(#sh2)"/>
<path d="M854.5 185 C854.5 142 881 127 921 120.4 C953 116.5 1000 114.5 1046.5 114.5 C1093 114.5 1140 116.5 1172 120.4 C1212 127 1238.5 142 1238.5 185 L1238.5 790 C1238.5 832 1222 846 1190 851.6 C1150 858.5 1093 861.5 1046.5 861.5 C1000 861.5 943 858.5 903 851.6 C871 846 854.5 832 854.5 790 Z" fill="#2c2c2c"/>
<g clip-path="url(#outerc)" fill="none"><path d="M854.5 185 C854.5 142 881 127 921 120.4 C953 116.5 1000 114.5 1046.5 114.5 C1093 114.5 1140 116.5 1172 120.4 C1212 127 1238.5 142 1238.5 185 L1238.5 790 C1238.5 832 1222 846 1190 851.6 C1150 858.5 1093 861.5 1046.5 861.5 C1000 861.5 943 858.5 903 851.6 C871 846 854.5 832 854.5 790 Z" stroke="url(#r3)" stroke-width="10.4" filter="url(#b1)"/><path d="M854.5 185 C854.5 142 881 127 921 120.4 C953 116.5 1000 114.5 1046.5 114.5 C1093 114.5 1140 116.5 1172 120.4 C1212 127 1238.5 142 1238.5 185 L1238.5 790 C1238.5 832 1222 846 1190 851.6 C1150 858.5 1093 861.5 1046.5 861.5 C1000 861.5 943 858.5 903 851.6 C871 846 854.5 832 854.5 790 Z" stroke="url(#r4)" stroke-width="2.8"/></g>
<rect x="1238.5" y="241" width="1.6" height="50" fill="#444"/>
<path d="M858 188 C858 147 880 133.5 921 128 C953 125 1000 124.7 1046.5 124.7 C1093 124.7 1140 125 1172 128 C1213 133.5 1235.3 147 1235.3 188 L1235.3 789 C1235.3 828 1219.5 841.5 1189 847.2 C1150 854 1093 857 1046.5 857 C1000 857 943 854 904 847.2 C873.5 841.5 858 828 858 789 Z" fill="url(#faceg)" stroke="#242424" stroke-width="2.4"/>
<path d="M858 188 C858 147 880 133.5 921 128 C953 125 1000 124.7 1046.5 124.7 C1093 124.7 1140 125 1172 128 C1213 133.5 1235.3 147 1235.3 188 L1235.3 789 C1235.3 828 1219.5 841.5 1189 847.2 C1150 854 1093 857 1046.5 857 C1000 857 943 854 904 847.2 C873.5 841.5 858 828 858 789 Z" fill="none" stroke="url(#inh)" stroke-width="1.6"/>
<rect x="1236" y="150" width="2.3" height="680" fill="url(#redge)"/>
<g clip-path="url(#face)">
<rect x="850" y="199" width="24" height="660" fill="url(#lbR)"/>
<g mask="url(#lm)"><rect x="855" y="120" width="21" height="740" fill="url(#leftb)"/></g>
<g mask="url(#rm)"><rect x="1195" y="120" width="45" height="740" fill="url(#rdark)"/></g>
<circle cx="1184" cy="151" r="7.6" fill="#232327"/><circle cx="1184" cy="151" r="5" fill="#1e1e22"/><circle cx="1184" cy="151" r="1.6" fill="#2c2c74"/>
<rect x="873.4" y="198.6" width="346.5" height="577.6" fill="#000"/>
<rect x="873.4" y="219.5" width="346.5" height="42.6" fill="#2c2c2c"/>
<rect x="873.4" y="263.3" width="346.5" height="469.2" fill="#fff"/>
<rect x="873.4" y="407" width="346.5" height="86" fill="url(#petg)"/>
<rect x="873.4" y="492.5" width="346.5" height="2" fill="#000"/>
<g filter="url(#b1)">
<path d="M840 100 L1090 100 L1046.4 199 L840 199 Z" fill="url(#refl)"/>
<path d="M874 199 L1046.4 199 L1037.4 219.5 L874 219.5 Z" fill="#fff" opacity="0.16"/>
<path d="M874 219.5 L1037.4 219.5 L1018.6 262.1 L874 262.1 Z" fill="#fff" opacity="0.085"/>
</g>
<path d="M1002.5 124 L1089 124 L1081 133 L1011.5 133 Z" fill="url(#grille)"/>
<path d="M1002.5 125.2 L1011 133.6 L1081.5 133.6 L1089.5 125.2" fill="none" stroke="#777" stroke-width="0.8" opacity="0.6"/>
<circle cx="898.5" cy="150.8" r="4.6" fill="#fff" opacity="0.06"/><circle cx="912.5" cy="150.8" r="4.6" fill="#fff" opacity="0.06"/>
</g>
<path d="M1193 213 L1184 203.6 A12.6 12.6 0 0 1 1202 203.6 Z" fill="#38aed9"/>
<path d="M1185.6 205.4 A10.6 10.6 0 0 1 1200.4 205.4 M1187.8 207.9 A7.4 7.4 0 0 1 1198.2 207.9 M1190 210.3 A4.2 4.2 0 0 1 1196 210.3" fill="none" stroke="#04141c" stroke-width="0.8"/>
<rect x="1205" y="201" width="10" height="12.4" fill="#38aed9"/><rect x="1208" y="199.6" width="4" height="1.6" fill="#38aed9"/>
<path d="M1211.6 202.6 L1207.8 207.8 H1210 L1208.6 211.8 L1212.4 206.4 H1210.2 Z" fill="#fff"/>
<g><path d="M884.6 236.2 A6.8 6.4 0 0 1 898.2 236.2 Z" fill="url(#droidg)"/><path d="M887 231.4 L885.6 229 M895.8 231.4 L897.2 229" stroke="#b0d058" stroke-width="0.9"/><rect x="884.6" y="237" width="13.6" height="12" rx="1.6" fill="url(#droidg)"/><rect x="880.6" y="237" width="3.2" height="9.4" rx="1.6" fill="url(#droidg)"/><rect x="899" y="237" width="3.2" height="9.4" rx="1.6" fill="url(#droidg)"/><rect x="886.8" y="247" width="3.2" height="6.8" rx="1.6" fill="url(#droidg)"/><rect x="892.8" y="247" width="3.2" height="6.8" rx="1.6" fill="url(#droidg)"/><path d="M891.4 238.4 L895.6 240.4 V245.4 L891.4 247.6 L887.2 245.4 V240.4 Z" fill="#fff"/><path d="M887.2 240.4 L891.4 242.6 L895.6 240.4 M891.4 242.6 V247.6" fill="none" stroke="#cfd8b0" stroke-width="0.6"/></g>
<text x="909.7" y="247.4" font-family="Liberation Sans, sans-serif" font-size="17.2" fill="#fff" textLength="65.2" lengthAdjust="spacingAndGlyphs">AdoptMe</text>
<text x="880.4" y="482.8" font-family="Liberation Sans, sans-serif" font-size="21" fill="#fff" stroke="#fff" stroke-width="0.3" textLength="45" lengthAdjust="spacingAndGlyphs">Cody</text>
<rect x="1104.5" y="468.5" width="107" height="18" fill="#5fb4ea" fill-opacity="0.28" stroke="#22a3f4" stroke-width="1"/>
<text x="1105.8" y="484" font-family="Liberation Sans, sans-serif" font-size="15.3" fill="#fff" stroke="#fff" stroke-width="0.2" textLength="105.6" lengthAdjust="spacingAndGlyphs">Golden Retriever</text>
<g fill="none" stroke="#f4f4f4" stroke-width="1.8"><path d="M966.4 747.6 L960.8 752.4 L966.4 757.2 M961.4 752.4 H982.6 A5.15 5.15 0 0 1 982.6 762.7 H973"/><path d="M1030.8 762.3 V754 L1046.5 746.6 L1062.2 754 V762.3 Z"/><path d="M1104.8 752.8 H1129.2 V762.3 H1104.8 Z M1110.5 748.3 H1134.6 V758.6"/></g>
</svg>
<div id="rstrip" class="abs"></div>
<div class="abs" style="left:1303px;top:299px;width:24px;height:81px;background:#c3c3c3;border-left:1px solid #8e8e8e"></div>
<svg class="abs" style="left:1307.5px;top:9px" width="14" height="13" viewBox="0 0 14 13"><path d="M0.4 3.9 C0.8 0.2 13.2 0.2 13.6 3.9 C13 4.8 11.8 4.9 11 4.6 H3 C2.2 4.9 1 4.8 0.4 3.9 Z" fill="#71777b"/><rect x="2.4" y="3.1" width="9.2" height="1" fill="#e0574a"/><rect x="6.1" y="1" width="1.8" height="2.1" fill="#e6b44c"/><path d="M2.8 4.6 H11.2 V7.6 C11.2 9.8 9.4 11 7 11 C4.6 11 2.8 9.8 2.8 7.6 Z" fill="#f1c898"/><rect x="1.9" y="5.6" width="1.1" height="2" rx="0.5" fill="#e4b784"/><rect x="11" y="5.6" width="1.1" height="2" rx="0.5" fill="#e4b784"/><rect x="4.2" y="5.8" width="1.6" height="0.9" fill="#5a4a3a"/><rect x="8.2" y="5.8" width="1.6" height="0.9" fill="#5a4a3a"/><path d="M4.4 9 Q7 7.6 9.6 9 L9.4 9.5 Q7 8.7 4.6 9.5 Z" fill="#8a6a48"/><path d="M2 13 C2 11 4.4 10.6 7 11.3 C9.6 10.6 12 11 12 13 Z" fill="#7d8387"/></svg>
<span class="vt" style="left:1321.5px;top:24.5px;letter-spacing:0.1px">Commander</span>
<span class="abs" style="left:1307.5px;top:113px;font:italic bold 16px 'DejaVu Sans',sans-serif;color:#6b98b6;line-height:20px;transform-origin:0 0;transform:scaleX(0.8)">m</span>
<span class="vt" style="left:1321.5px;top:133.3px;letter-spacing:-0.18px">Maven Projects</span>
<svg class="abs" style="left:1307.5px;top:235.5px" width="14" height="14" viewBox="0 0 14 14"><path d="M12.1 8.6 A5.4 5.4 0 1 1 6.2 1.4" fill="none" stroke="#93cf72" stroke-width="2"/><path d="M6.2 1.4 A5.4 5.4 0 0 1 12.2 5.4" fill="none" stroke="#2fb062" stroke-width="2"/><circle cx="6.8" cy="6.8" r="2.6" fill="#20ad5c"/></svg>
<span class="vt" style="left:1321.5px;top:252.3px;letter-spacing:0">Gradle</span>
<svg class="abs" style="left:1306.5px;top:309.5px" width="16" height="17" viewBox="0 0 16 17"><path d="M3.4 5.2 A4.4 4 0 0 1 12.2 5.2 Z" fill="#9dbc39"/><path d="M4.8 1.8 L3.9 0.4 M10.8 1.8 L11.7 0.4" stroke="#9dbc39" stroke-width="0.9"/><rect x="3.4" y="5.9" width="8.8" height="7" fill="#9dbc39"/><rect x="0.7" y="6" width="2" height="5.6" rx="0.9" fill="#9dbc39"/><rect x="12.9" y="6" width="2" height="5.6" rx="0.9" fill="#9dbc39"/><circle cx="5.9" cy="3.4" r="0.6" fill="#c3c3c3"/><circle cx="9.7" cy="3.4" r="0.6" fill="#c3c3c3"/><path d="M3.8 12.2 C6.4 7.8 12.6 7.8 15.6 12.2 C12.6 16.4 6.4 16.4 3.8 12.2 Z" fill="#f2f6fa" stroke="#7c7c7c" stroke-width="1"/><circle cx="9.8" cy="12.2" r="2.7" fill="#5cb6e6"/><circle cx="9.8" cy="12.2" r="1.1" fill="#1f4f7a"/></svg>
<span class="vt" style="left:1321.5px;top:329.6px;letter-spacing:-0.22px">Preview</span>
</body></html>
